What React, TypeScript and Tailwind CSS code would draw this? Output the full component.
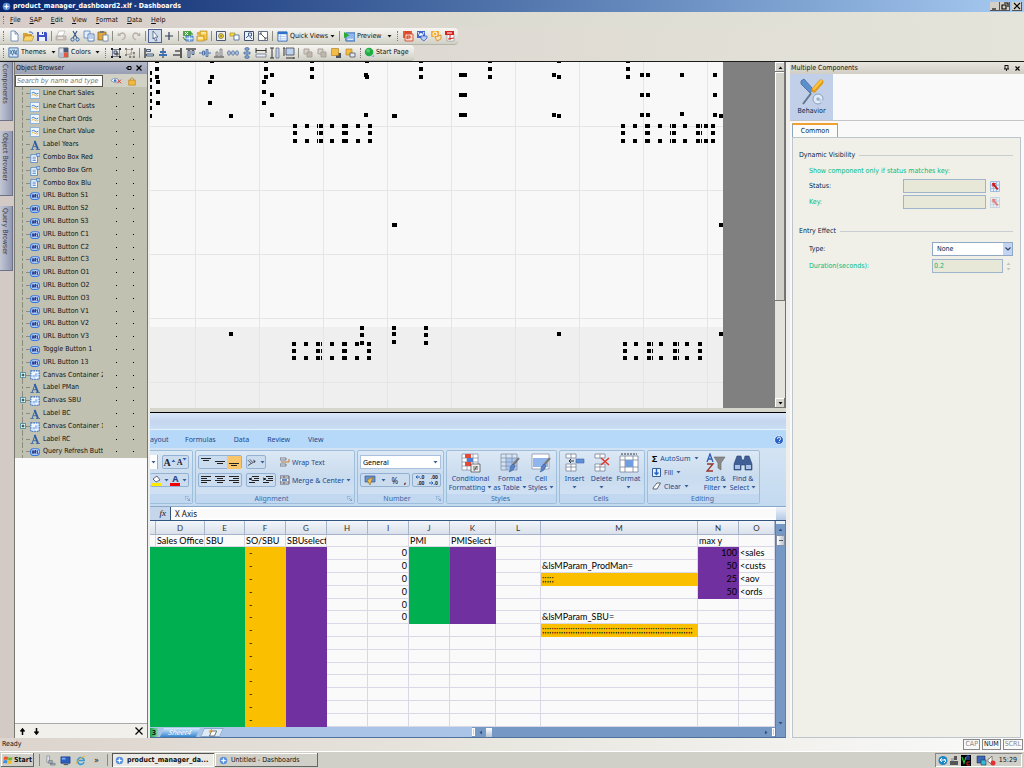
import type { ReactNode } from "react";
import clsx from "clsx";

type IconName = keyof typeof glyphs;

const glyphs = {
  page: <path d="M3 1h4l3 3v7H3z M7 1v3h3" fill="#fdfeff" stroke="#5f7fae" strokeWidth=".8" />,
  open: (
    <>
      <path d="M1 3h4l1 1h4v7H1z" fill="#d9a032" />
      <path d="M3 6h9l-2 5H1z" fill="#f9d56b" stroke="#a77b25" strokeWidth=".5" />
      <path d="M7 2q3-1 4 2" fill="none" stroke="#3f6fb8" />
    </>
  ),
  save: (
    <>
      <path d="M1 2h9l1 1v8H1z" fill="#3f50c8" />
      <path d="M3 2h5v3H3zM3 7h6v4H3z" fill="#eef1ff" />
      <path d="M6 2h1v2H6z" fill="#3040a0" />
    </>
  ),
  print: (
    <>
      <path d="M4 1h6L8 6H2z" fill="#fff" stroke="#b0a9a4" strokeWidth=".6" />
      <path d="M1 6h10v4H1z" fill="#c9c1bb" stroke="#a79e98" strokeWidth=".6" />
      <path d="M3 8h5" stroke="#fff" />
    </>
  ),
  cut: (
    <>
      <path d="M4 1l4 7M8 1L4 8" stroke="#3c5680" strokeWidth="1.2" />
      <circle cx="3.5" cy="9.5" r="1.6" fill="none" stroke="#2f62a8" />
      <circle cx="8.5" cy="9.5" r="1.6" fill="none" stroke="#2f62a8" />
    </>
  ),
  copy: (
    <>
      <path d="M1 1h6v7H1z" fill="#e4edfb" stroke="#5580bd" strokeWidth=".8" />
      <path d="M5 4h6v7H5z" fill="#f6faff" stroke="#3f6cb0" strokeWidth=".8" />
      <path d="M6 6h4M6 8h4" stroke="#5580bd" strokeWidth=".7" />
    </>
  ),
  paste: (
    <>
      <path d="M1 2h8v8H1z" fill="#e0a83f" stroke="#7c5a1c" strokeWidth=".7" />
      <path d="M3 1h4v2H3z" fill="#777" />
      <path d="M6 5h5v6H6z" fill="#fff" stroke="#4a6da8" strokeWidth=".7" />
    </>
  ),
  undo: (
    <>
      <path d="M2 2.500L1.500 6 5 6z" fill="#b7afa8" />
      <path d="M3 5Q7 1 9 5q1 3-3 5" fill="none" stroke="#b7afa8" strokeWidth="1.300" />
    </>
  ),
  redo: (
    <>
      <path d="M10 2.500l.5 3.500L7 6z" fill="#b7afa8" />
      <path d="M9 5Q5 1 3 5q-1 3 3 5" fill="none" stroke="#b7afa8" strokeWidth="1.300" />
    </>
  ),
  cursor: <path d="M4 1l5 6H6.500L8 10.500 6.500 11 5 7.500 4 9z" fill="#fff" stroke="#334a78" strokeWidth=".7" />,
  plus: <path d="M6 2v8M2 6h8" stroke="#33405a" strokeWidth="1.200" />,
  excel: (
    <>
      <path d="M1 1h8v5H1z" fill="#4da548" />
      <path d="M3 2l3 3M6 2L3 5" stroke="#fff" />
      <path d="M4 6h7v5H4z" fill="#8fb8ee" stroke="#3f70b5" strokeWidth=".8" />
      <path d="M1 7l2 3h1M10 5V3H8" fill="none" stroke="#2f8a35" />
      <path d="M4 8.500h7M7.500 6v5" stroke="#fff" strokeWidth=".6" />
    </>
  ),
  db: (
    <>
      <path d="M4 1h7v9H4z" fill="#f5c945" stroke="#ad7c18" strokeWidth=".6" />
      <path d="M1 6h7v5H1z" fill="#ffd050" stroke="#ad7c18" strokeWidth=".6" />
      <path d="M1 2h3v3H1z" fill="#e0b040" />
      <path d="M5 3h5M2 8h5" stroke="#fff" />
    </>
  ),
  gear: (
    <>
      <path d="M1.500 1.500h9v9h-9z" fill="#eef0ec" stroke="#4b5876" />
      <circle cx="6" cy="6" r="2.500" fill="#f0cf2b" stroke="#555" strokeWidth=".6" />
      <circle cx="6" cy="6" r=".8" fill="#555" />
    </>
  ),
  flow: (
    <>
      <path d="M1 3h5v3H1z" fill="#f5dc4d" stroke="#a08010" strokeWidth=".6" />
      <path d="M5 5h5v5H5z" fill="#fff" stroke="#42618f" strokeWidth=".8" />
    </>
  ),
  fit: (
    <>
      <path d="M1.500 1.500h9v9h-9z" fill="#eaf1fa" stroke="#42506b" />
      <path d="M5.500 3h3v3h-3zM3 8l2-2M7 7l2 2" fill="none" stroke="#42618f" />
    </>
  ),
  expand: (
    <>
      <path d="M1.500 1.500h9v9h-9z" fill="#fff" stroke="#42506b" strokeWidth=".8" />
      <path d="M3 5V3h2M7 9h2V7M3.500 3.500l5 5" fill="none" stroke="#445" strokeWidth=".9" />
    </>
  ),
  window: (
    <>
      <path d="M1 1h10v10H1z" fill="#f7fbff" stroke="#2763b5" />
      <path d="M1 1h10v2.500H1z" fill="#2f72cb" />
      <path d="M2 6h8M2 8.500h8M4 4v7" stroke="#9dbce5" strokeWidth=".8" />
    </>
  ),
  preview: (
    <>
      <path d="M2 2h10v9H2z" fill="#8db7ec" stroke="#376cb2" />
      <path d="M0 1l6 3.500L0 8z" fill="#2daa32" />
      <path d="M4 9h6" stroke="#fff" />
    </>
  ),
  ppt: (
    <>
      <path d="M1 1h9v7H1z" fill="#e45b3c" />
      <path d="M3 4h8v7H3z" fill="#fbd9ca" stroke="#cb3c21" strokeWidth=".8" />
      <path d="M3 2h5M5 9V6h3v2H5" fill="none" stroke="#cf3418" />
    </>
  ),
  word: (
    <>
      <path d="M1 1h8v7H1z" fill="#4167cf" />
      <path d="M2 2l2 4 1-3 1 3 2-4" stroke="#fff" fill="none" />
      <path d="M5 6h6v2l-3 3-3-2z" fill="#b5ccf4" stroke="#3456b5" strokeWidth=".7" />
    </>
  ),
  outlook: (
    <>
      <path d="M1 1h8v6H1z" fill="#f5ad37" />
      <circle cx="5" cy="4" r="2" fill="none" stroke="#fff" />
      <path d="M5 7l6-2v4l-4 2z" fill="#ffe2ab" stroke="#ca7a17" strokeWidth=".7" />
    </>
  ),
  pdf: (
    <>
      <path d="M3 4h7v7H3z" fill="#fff" stroke="#999" strokeWidth=".7" />
      <path d="M1 1h9v4H1z" fill="#d8201c" />
      <path d="M3 3h5" stroke="#fff" />
      <path d="M4 9l6-1M6 5v5" stroke="#c22" />
    </>
  ),
  themes: (
    <>
      <path d="M1 1h10v10H1z" fill="#d9ebfb" stroke="#3b6ea5" />
      <path d="M2 3l3 6 2-6 3 6M2 8l3-5 3 5 2-5" fill="none" stroke="#2a5c93" strokeWidth=".8" />
    </>
  ),
  colors: (
    <>
      <path d="M1 1h10v10H1z" fill="#dfe4ea" stroke="#567" strokeWidth=".8" />
      <path d="M6 1h5v5H6z" fill="#4a5a78" />
      <path d="M6 6h5v5H6z" fill="#e4593d" />
      <path d="M1 6h5v5H1z" fill="#b5c3d4" />
    </>
  ),
  group: (
    <>
      <path d="M2.500 2.500h7v7h-7z" fill="none" stroke="#42506b" strokeWidth=".7" />
      <path d="M1 1h2v2H1zM9 1h2v2H9zM1 9h2v2H1zM9 9h2v2H9z" fill="#222" />
      <path d="M4 4h3v3H4zM6 6h2v2H6z" fill="#bcd3f0" stroke="#223" strokeWidth=".7" />
    </>
  ),
  ungroup: (
    <>
      <path d="M2.500 2.500h5v5h-5zM6 6h4v4H6z" fill="none" stroke="#b3aaa0" />
      <path d="M1 1h2v2H1zM7 1h2v2H7zM1 7h2v2H1zM9 9h2v2H9zM5 9h2v2H5zM9 5h2v2H9z" fill="#8b8379" />
    </>
  ),
  alignL: (
    <>
      <path d="M2 1v10" stroke="#222" strokeWidth="1.200" />
      <path d="M3.500 2.500h4v2h-4zM3.500 7h7v2h-7z" fill="#cfe0f5" stroke="#2c3c5c" strokeWidth=".8" />
    </>
  ),
  alignC: (
    <>
      <path d="M6 1v10" stroke="#222" />
      <path d="M2 8h8M3 5h6" stroke="#3a70b8" strokeWidth="2" />
    </>
  ),
  alignR: (
    <>
      <path d="M10 1v10" stroke="#222" strokeWidth="1.400" />
      <path d="M4 4h5M2 8h7" stroke="#777" strokeWidth="2" />
    </>
  ),
  alignT: (
    <>
      <path d="M1 2h10" stroke="#222" strokeWidth="1.200" />
      <path d="M3 3.500h2v7H3zM7 3.500h2v4H7z" fill="#cfe0f5" stroke="#30405f" strokeWidth=".8" />
    </>
  ),
  alignM: (
    <>
      <path d="M0 6h12" stroke="#3a70b8" />
      <path d="M3.500 4h2v4h-2zM7 2.500h2v7H7z" fill="#9bbce8" stroke="#3d5f90" strokeWidth=".7" />
    </>
  ),
  alignB: (
    <>
      <path d="M1 10h10" stroke="#555" strokeWidth="1.200" />
      <path d="M3 5h2v4H3zM7 2h2v7H7z" fill="#d5d8de" stroke="#76777e" strokeWidth=".8" />
    </>
  ),
  spaceH: (
    <>
      <path d="M0 6h12" stroke="#3a70b8" />
      <path d="M1 4h2v4H1zM5 4h2v4H5zM9 4h2v4H9z" fill="#e8f0fb" stroke="#3d5f90" strokeWidth=".7" />
    </>
  ),
  spaceV: (
    <>
      <path d="M6 0v12" stroke="#3a70b8" />
      <path d="M4 1h4v2H4zM3 5h6v2H3zM4 9h4v2H4z" fill="#9bbce8" stroke="#3d5f90" strokeWidth=".7" />
    </>
  ),
  sameW: (
    <>
      <path d="M1 1v5M11 1v5M1 3.500h10" stroke="#222" strokeWidth=".9" />
      <path d="M1 7h10v3H1z" fill="#e4ecf7" stroke="#667" strokeWidth=".7" />
    </>
  ),
  sameH: (
    <>
      <path d="M1 1h4M1 11h4M3 1v10" stroke="#222" strokeWidth=".9" />
      <path d="M7 1h3v10H7z" fill="#bcd3f0" stroke="#667" strokeWidth=".7" />
    </>
  ),
  sameB: (
    <>
      <path d="M1 1v8M3 11h8M0 1h2M11 10v2" stroke="#222" strokeWidth=".9" />
      <path d="M3 1h8v7H3z" fill="#bcd3f0" stroke="#445" strokeWidth=".8" />
    </>
  ),
  backOff: (
    <>
      <path d="M2 2h5v5H2z" fill="#d8d2cb" stroke="#a9a199" />
      <path d="M5 5h5v5H5z" fill="#beb6ad" stroke="#a9a199" />
    </>
  ),
  front: (
    <>
      <path d="M6 6h5v5H6z" fill="#4d5360" />
      <path d="M1.500 1.500h7v7h-7z" fill="#f4bb45" stroke="#a8781d" strokeWidth=".6" />
    </>
  ),
  back: (
    <>
      <path d="M2 2h6v6H2z" fill="#f4bb45" stroke="#a8781d" strokeWidth=".6" />
      <path d="M6 6h5v4H6z" fill="#e4e9f0" stroke="#4d5360" strokeWidth=".8" />
    </>
  ),
  start: (
    <>
      <circle cx="5.500" cy="5.500" r="4.700" fill="#1fae45" />
      <circle cx="4.500" cy="4" r="2" fill="#7fe08e" opacity=".6" />
      <path d="M8 11l3-3v3z" fill="#7db9e8" />
    </>
  ),
  chart: (
    <>
      <path d="M.5.5h11v11H.5z" fill="#eef6ff" stroke="#6ea0dc" strokeWidth=".9" />
      <path d="M2 5q2-2 4 0t4 0" fill="none" stroke="#3f7cc8" strokeWidth="1.200" />
      <path d="M2 7.500q2-2 4 0t4 0" fill="none" stroke="#ecb73c" strokeWidth="1.200" />
    </>
  ),
  label: (
    <>
      <path d="M2.500 11L6 1.500" fill="none" stroke="#2b5fa5" strokeWidth="1.100" />
      <path d="M5.500 1l4 10" fill="none" stroke="#2b5fa5" strokeWidth="2.200" />
      <path d="M.5 11.500h4M7 11.500h5M4 8h4" stroke="#2b5fa5" />
    </>
  ),
  combo: (
    <>
      <path d="M1 2h8v9.500H1z" fill="#f2f8ff" stroke="#3a76c6" strokeWidth=".9" />
      <path d="M8 .5h4v3.500H8z" fill="#bcd6f5" stroke="#2f69b8" strokeWidth=".8" />
      <path d="M3 5h4M3 7h4M3 9h4" stroke="#3a76c6" strokeWidth=".9" />
    </>
  ),
  url: (
    <>
      <rect x=".7" y="2" width="10.600" height="8" rx="3" fill="#cfe3ff" stroke="#3878dc" strokeWidth="1.300" />
      <path d="M2.800 4v3.500h1.500V4M5.800 8V4.300h1.400v1.600H6l1.200 2M8.800 4v3.700H10" fill="none" stroke="#0d2480" strokeWidth="1.100" />
    </>
  ),
  container: (
    <>
      <path d="M1 1h10v10H1z" fill="#eff6ff" stroke="#2f6bc4" strokeWidth="1.300" strokeDasharray="2 1" />
      <path d="M3 6h3v3H3zM6 4h3v4H6z" fill="#9cc3f2" />
    </>
  ),
  eye: (
    <>
      <path d="M0 6q5-5 9 0-4 4-9 0z" fill="#fff" stroke="#6c7faa" strokeWidth=".8" />
      <circle cx="4.500" cy="6" r="1.500" fill="#3c77c4" />
      <path d="M7 5l4 4M11 5L7 9" stroke="#d33" />
    </>
  ),
  lock: (
    <>
      <path d="M4 6V3.500q2-3 4 0V6" fill="none" stroke="#bd8b24" />
      <path d="M2 5h8v6H2z" fill="#f3b83c" stroke="#b37d1a" strokeWidth=".7" />
    </>
  ),
  orb: (
    <>
      <circle cx="6" cy="6" r="5" fill="#5b93e0" />
      <path d="M6 2l1 3 3 1-3 1-1 3-1-3-3-1 3-1z" fill="#fff" />
    </>
  ),
  monitor: (
    <>
      <path d="M1 2h10v7H1z" fill="#2c5fc0" stroke="#173677" strokeWidth=".7" />
      <path d="M4 10h5v1H4z" fill="#444" />
      <path d="M2 3h4v2H2z" fill="#7daaf0" />
    </>
  ),
  server: (
    <>
      <path d="M2 1h3v7H2z" fill="#dfe3e8" stroke="#76828f" strokeWidth=".7" />
      <path d="M4 6h4v3H4zM6 9h5v2H6z" fill="#a5afb9" stroke="#5f6a76" strokeWidth=".6" />
    </>
  ),
  ie: (
    <>
      <path d="M10 8q-2 3-5 2-3-2-2-5 2-3 5-2 2 1 2 3H4" fill="none" stroke="#3399dd" strokeWidth="1.700" />
      <path d="M1 10Q3 4 11 1" fill="none" stroke="#f1b52a" />
    </>
  ),
};

function Icon({ name, size = 12 }: { name: IconName; size?: number }) {
  return (
    <svg width={size} height={size} viewBox="0 0 12 12" className="shrink-0" aria-hidden="true">
      {glyphs[name]}
    </svg>
  );
}

const Arrow = ({ className = "text-black" }: { className?: string }) => (
  <svg width="5" height="3" viewBox="0 0 5 3" className={clsx("shrink-0", className)} aria-hidden="true">
    <path d="M.5 0h4L2.500 2.500z" fill="currentColor" />
  </svg>
);

function Tool({ name, active }: { name: IconName; active?: boolean }) {
  return (
    <button
      aria-label={name}
      className={clsx(
        "flex h-[14px] w-[14px] shrink-0 items-center justify-center border",
        active ? "border-[#4f6391] bg-[#d5dcea]" : "border-transparent"
      )}
    >
      <Icon name={name} />
    </button>
  );
}

const Grip = () => <span className="mx-[3px] h-[10px] w-0 shrink-0 border-l border-dotted border-[#777]" />;
const Sep = () => <span className="mx-[2px] h-[10px] w-px shrink-0 bg-[#8d8d86]" />;

const menus = ["File", "SAP", "Edit", "View", "Format", "Data", "Help"];

const tree: { name: string; icon: IconName; expand?: boolean }[] = [
  { name: "Line Chart Sales", icon: "chart" },
  { name: "Line Chart Custs", icon: "chart" },
  { name: "Line Chart Ords", icon: "chart" },
  { name: "Line Chart Value", icon: "chart" },
  { name: "Label Years", icon: "label" },
  { name: "Combo Box Red", icon: "combo" },
  { name: "Combo Box Grn", icon: "combo" },
  { name: "Combo Box Blu", icon: "combo" },
  { name: "URL Button S1", icon: "url" },
  { name: "URL Button S2", icon: "url" },
  { name: "URL Button S3", icon: "url" },
  { name: "URL Button C1", icon: "url" },
  { name: "URL Button C2", icon: "url" },
  { name: "URL Button C3", icon: "url" },
  { name: "URL Button O1", icon: "url" },
  { name: "URL Button O2", icon: "url" },
  { name: "URL Button O3", icon: "url" },
  { name: "URL Button V1", icon: "url" },
  { name: "URL Button V2", icon: "url" },
  { name: "URL Button V3", icon: "url" },
  { name: "Toggle Button 1", icon: "url" },
  { name: "URL Button 13", icon: "url" },
  { name: "Canvas Container 2", icon: "container", expand: true },
  { name: "Label PMan", icon: "label" },
  { name: "Canvas SBU", icon: "container", expand: true },
  { name: "Label BC", icon: "label" },
  { name: "Canvas Container 1", icon: "container", expand: true },
  { name: "Label RC", icon: "label" },
  { name: "Query Refresh Button", icon: "url" },
];

// selection handles on the design canvas: [x positions, y positions]
const handles: [number[], number[]][] = [
  [[0], [11, 18, 25, 32, 39, 46, 54]],
  [[7], [-1, 7, 15]],
  [[8], [20, 30, 41]],
  [[62], [-1, 15]],
  [[60], [20, 41]],
  [[81], [54]],
  [[116], [-1, 7, 15]],
  [[114], [20, 30, 41]],
  [[122], [13, 33, 53]],
  [[162, 271, 340, 478], [-1, 7, 15]],
  [[216], [13, 53]],
  [[217], [-1, 15]],
  [[311, 315], [13, 33, 53]],
  [[404], [13, 53]],
  [[409], [-1, 15, 54]],
  [[492, 498, 565], [13, 33, 53]],
  [[532], [13, 52]],
  [[571], [54, 163, 272]],
  [[245], [54, 163]],
  [[145, 171, 194, 196, 220], [64, 71, 79]],
  [[157, 182, 208], [64, 79]],
  [[473, 498, 524, 548, 563], [64, 71, 79]],
  [[485, 510, 535, 556], [64, 79]],
  [[81, 409], [272]],
  [[212, 276], [266, 273, 281]],
  [[244], [266, 272, 280]],
  [[144, 168, 194, 195, 219], [282, 289, 296]],
  [[156, 182, 207], [282, 296]],
  [[475, 499, 525, 550], [282, 289, 296]],
  [[486, 511, 537], [282, 296]],
];
const slivers: [number, number[]][] = [
  [242, [54, 163, 272]],
  [167, [64, 71, 79]],
  [495, [64, 71, 79]],
  [520, [64, 71, 79]],
  [551, [64, 71, 79]],
  [171, [282, 289, 296]],
  [502, [282, 289, 296]],
  [528, [282, 289, 296]],
];

function DesignCanvas() {
  return (
    <div className="flex h-[346px] shrink-0 bg-[#808080]">
      <svg width="573" height="346" viewBox="0 0 573 346" className="shrink-0" role="img" aria-label="Canvas">
        <path d="M0 0h573v346H0z" fill="#f8f8f8" />
        <path d="M0 265h573v81H0z" fill="#efefef" />
        <g fill="#e5e5e5">
          {[45, 109, 173, 237, 301, 365, 429, 493, 557].map((x) => (
            <rect key={x} x={x} y="0" width="1" height="346" />
          ))}
          {[64, 128, 192, 256, 320].map((y) => (
            <rect key={y} x="0" y={y} width="573" height="1" />
          ))}
        </g>
        {handles.map(([xs, ys]) =>
          xs.map((x) => ys.map((y) => <rect key={`${x}-${y}`} x={x - 2} y={y - 2} width="4" height="4" fill="#000" />))
        )}
        {slivers.map(([x, ys]) =>
          ys.map((y) => <rect key={`${x}-${y}`} x={x} y={y - 2} width="1" height="4" fill="#000" />)
        )}
      </svg>
      <div className="ml-auto flex w-[11px] flex-col border-r border-[#707070] bg-[#e4e4dc]">
        <button aria-label="Scroll up" className="flex h-[10px] items-center justify-center bg-[#d4d4cc] shadow-[inset_-1px_-1px_0_#777,inset_1px_1px_0_#fff]">
          <Arrow className="rotate-180" />
        </button>
        <div className="h-[229px] bg-[#d0d0c8] shadow-[inset_-1px_-1px_0_#777,inset_1px_1px_0_#fff]" />
        <button aria-label="Scroll down" className="mt-auto flex h-[10px] items-center justify-center bg-[#d4d4cc] shadow-[inset_-1px_-1px_0_#777,inset_1px_1px_0_#fff]">
          <Arrow />
        </button>
      </div>
    </div>
  );
}

function RibbonGroup({ label, launcher, className, children }: { label?: string; launcher?: boolean; className: string; children: ReactNode }) {
  return (
    <section className={clsx("mr-[2px] flex h-[54px] shrink-0 flex-col rounded-[2px] border border-[#9ebfdb] bg-linear-to-b from-[#dce8f5] via-[#c9dbee] to-[#d3e4f5]", className)}>
      <div className="flex min-h-0 flex-1">{children}</div>
      <div className="flex h-[9px] items-center bg-[#c2d8f0] pr-[2px] text-[#3f68a5]">
        <span className="flex-1 text-center">{label}</span>
        {launcher && (
          <svg width="5" height="5" viewBox="0 0 5 5" aria-hidden="true">
            <path d="M0 4V0h4M2 2l3 3M5 2v3H2" fill="none" stroke="#6a8fb8" strokeWidth=".7" />
          </svg>
        )}
      </div>
    </section>
  );
}

const btnSet = "flex h-[14px] items-center rounded-[2px] border border-[#93b1d3] bg-[#cbdcef]";

const Lines = ({ d, box }: { d: string; box?: boolean }) => (
  <button aria-label="Align" className={clsx("flex h-[13px] w-[14px] items-center justify-center", box && "bg-[#f9c56a]")}>
    <svg width="10" height="10" viewBox="0 0 10 10">
      <path d={d} stroke="#222" strokeWidth="1" fill="none" />
    </svg>
  </button>
);

function BigButton({ lines, className, children }: { lines: string[]; className: string; children: ReactNode }) {
  return (
    <button className={clsx("flex shrink-0 flex-col items-center pt-[2px] text-center leading-[9px]", className)}>
      <svg width="20" height="20" viewBox="0 0 20 20" className="mb-px">
        {children}
      </svg>
      <span>{lines[0]}</span>
      <span className="flex h-[9px] items-center gap-[2px] whitespace-nowrap">
        {lines[1]}
        <Arrow className="text-[#3a5f96]" />
      </span>
    </button>
  );
}

const gridPath = "M1 1h16v16H1zM1 5h16M1 9h16M1 13h16M6 1v16M12 1v16";
const brush = (
  <>
    <path d="M19 5l-7 8" stroke="#777" strokeWidth="2" />
    <path d="M13 11l2 2q-1 5-6 6 2-2 1-5z" fill="#5b83c3" stroke="#355a94" strokeWidth=".5" />
  </>
);

function Ribbon() {
  return (
    <div className="flex h-[59px] shrink-0 border-b border-[#8aa8c8] bg-linear-to-b from-[#d3e3f3] to-[#c3daf0] pt-[2px] text-[#24498c]">
      <RibbonGroup className="w-[43px] rounded-l-none border-l-0" launcher>
        <div className="flex flex-col gap-1 pt-[4px]">
          <div className="flex gap-1">
            <span className="flex h-[14px] w-2 items-center justify-center border-r border-[#93b1d3] bg-white">
              <Arrow className="text-[#3a5f96]" />
            </span>
            <div className={clsx(btnSet, "w-[27px] justify-around font-['Liberation_Serif',serif] font-bold text-[#223]")}>
              <button className="flex text-[10px]">
                A
                <Arrow className="mt-px rotate-180 text-[#2c62b5]" />
              </button>
              <button className="flex text-[8px]">
                A
                <Arrow className="text-[#2c62b5]" />
              </button>
            </div>
          </div>
          <div className={clsx(btnSet, "w-[39px] justify-around border-l-0")}>
            <svg width="11" height="12" viewBox="0 0 11 12" aria-hidden="true">
              <path d="M2 5l4-3 3 4-4 2z" fill="#fff" stroke="#446" strokeWidth=".8" />
              <path d="M0 9h10v3H0z" fill="#ffea00" />
            </svg>
            <Arrow className="text-[#3a5f96]" />
            <button className="flex flex-col items-center text-[9px] leading-[8px] font-bold text-[#24498c]">
              A<span className="h-[3px] w-[10px] bg-[#f00000]" />
            </button>
            <Arrow className="text-[#3a5f96]" />
          </div>
        </div>
      </RibbonGroup>

      <RibbonGroup className="w-[160px]" label="Alignment" launcher>
        <div className="flex flex-col gap-1 pt-[4px] pl-[2px]">
          <div className="flex gap-1">
            <div className={btnSet}>
              <Lines d="M0 1.500h10M2 3.500h6" />
              <Lines d="M0 4.500h10M2 6.500h6" />
              <Lines d="M0 6.500h10M2 8.500h6" box />
            </div>
            <div className={clsx(btnSet, "w-[20px] justify-center gap-1")}>
              <svg width="10" height="10" viewBox="0 0 10 10" aria-hidden="true">
                <path d="M1 3l4 4M3 2l3 3M1 9l8-5M7 3l2 1-1 2" stroke="#445" fill="none" />
              </svg>
              <Arrow className="text-[#3a5f96]" />
            </div>
          </div>
          <div className="flex gap-1">
            <div className={btnSet}>
              <Lines d="M0 1.500h10M0 3.500h6M0 5.500h10M0 7.500h6" />
              <Lines d="M0 1.500h10M2 3.500h6M0 5.500h10M2 7.500h6" />
              <Lines d="M0 1.500h10M4 3.500h6M0 5.500h10M4 7.500h6" />
            </div>
            <div className={btnSet}>
              <Lines d="M3 1.500h7M5 3.500h5M3 5.500h7M0 7.500h6M3 3L0 4l3 1" />
              <Lines d="M3 1.500h7M5 3.500h5M3 5.500h7M0 7.500h6M0 3l3 1-3 1" />
            </div>
          </div>
        </div>
        <div className="ml-1 flex flex-col gap-1 pt-[4px]">
          <button className="flex h-[14px] items-center gap-[2px]">
            <svg width="10" height="10" viewBox="0 0 10 10">
              <path d="M0 1h6v2H0zM0 7h6v2H0z" fill="#e7edf5" stroke="#556" strokeWidth=".7" />
              <path d="M1 5h8V2" stroke="#c17a26" fill="none" />
            </svg>
            Wrap Text
          </button>
          <button className="flex h-[14px] items-center gap-[2px] whitespace-nowrap">
            <svg width="10" height="10" viewBox="0 0 10 10">
              <path d="M0 1h9v8H0zM0 3h9M0 7h9M4 1v2M4 7v2" fill="#fff" stroke="#445" strokeWidth=".8" />
              <path d="M2 5h5" stroke="#2c62b5" strokeWidth="1.500" />
            </svg>
            Merge &amp; Center
            <Arrow className="text-[#3a5f96]" />
          </button>
        </div>
      </RibbonGroup>

      <RibbonGroup className="w-[87px]" label="Number" launcher>
        <div className="flex w-full flex-col gap-1 px-[2px] pt-[4px]">
          <label className="flex h-[14px] items-center border border-[#a9c1de] bg-white pr-[2px] text-black">
            <select aria-label="Number format" className="min-w-0 flex-1 appearance-none pl-[2px]">
              <option>General</option>
            </select>
            <Arrow className="text-[#3a5f96]" />
          </label>
          <div className="flex justify-between">
            <div className={clsx(btnSet, "w-[50px] justify-around")}>
              <svg width="12" height="12" viewBox="0 0 12 12" aria-hidden="true">
                <path d="M1 2h10v6H1z" fill="#6a93cf" stroke="#35578f" strokeWidth=".7" />
                <path d="M3 6l6-3-3 8z" fill="#edc04d" stroke="#8b661a" strokeWidth=".6" />
              </svg>
              <Arrow className="text-[#3a5f96]" />
              <button className="text-[8px] text-[#223]">%</button>
              <button className="text-[9px] font-bold text-[#223]">,</button>
            </div>
            <div className={clsx(btnSet, "w-[29px] justify-around text-[5px] leading-[6px] font-bold text-[#223]")}>
              <button className="flex flex-col items-end">
                <span className="flex h-[6px] items-center">
                  <svg width="5" height="4" viewBox="0 0 5 4"><path d="M5 2H1M2.500.5L1 2l1.500 1.500" stroke="#2c62b5" fill="none" /></svg>
                  .0
                </span>
                <span className="h-[6px]">.00</span>
              </button>
              <button className="flex flex-col items-end">
                <span className="h-[6px]">.00</span>
                <span className="flex h-[6px] items-center">
                  <svg width="5" height="4" viewBox="0 0 5 4"><path d="M0 2h4M2.500.5L4 2 2.500 3.500" stroke="#2c62b5" fill="none" /></svg>
                  .0
                </span>
              </button>
            </div>
          </div>
        </div>
      </RibbonGroup>

      <RibbonGroup className="w-[111px]" label="Styles">
        <BigButton lines={["Conditional", "Formatting"]} className="w-[47px]">
          <path d={gridPath} fill="#fff" stroke="#8793a8" strokeWidth=".8" />
          <path d="M4 1h6v4H4zM4 9h6v4H4z" fill="#e44a35" />
          <path d="M6 5h6v4H6z" fill="#4b7fd8" />
          <path d="M10 11h9v8h-9z" fill="#eee" stroke="#444" strokeWidth=".7" />
          <path d="M12 14h5M12 16h5M16 13l-3 5" stroke="#333" strokeWidth=".7" />
        </BigButton>
        <BigButton lines={["Format", "as Table"]} className="w-[32px]">
          <path d="M6 5h11v12H6z" fill="#a7c7f2" />
          <path d={gridPath} fill="none" stroke="#8793a8" strokeWidth=".8" />
          {brush}
        </BigButton>
        <BigButton lines={["Cell", "Styles"]} className="w-[30px]">
          <path d="M1 1h17v15H1z" fill="#fff" stroke="#8793a8" strokeWidth=".8" />
          <path d="M2 5h15v9H2z" fill="#8fb5ec" />
          {brush}
        </BigButton>
      </RibbonGroup>

      <RibbonGroup className="w-[86px]" label="Cells">
        <BigButton lines={["Insert", ""]} className="w-[29px]">
          <path d="M1 1h10v4H1zM1 11h10v7H1zM1 14h10M6 1v4M6 11v7" fill="#fff" stroke="#77839a" strokeWidth=".8" />
          <path d="M11 6h8v4h-8z" fill="#5f8fd8" stroke="#3f66a5" strokeWidth=".6" />
          <path d="M9 8H4M6 6L4 8l2 2" stroke="#333" fill="none" />
        </BigButton>
        <BigButton lines={["Delete", ""]} className="w-[25px]">
          <path d="M3 1h10v4H3zM3 11h10v7H3zM3 14h10M8 1v4M8 11v7" fill="#fff" stroke="#77839a" strokeWidth=".8" />
          <path d="M9 5l8 7M17 5l-8 7" stroke="#e23a28" strokeWidth="1.600" />
        </BigButton>
        <BigButton lines={["Format", ""]} className="w-[29px]">
          <path d="M1 3h18v16H1zM1 7h18M1 14h18M6 3v16M14 3v16" fill="#fff" stroke="#77839a" strokeWidth=".8" />
          <path d="M6 7h8v7H6z" fill="#6f9de0" />
          <path d="M2 1h16" stroke="#333" strokeDasharray="2 1" />
        </BigButton>
      </RibbonGroup>

      <RibbonGroup className="w-[113px]" label="Editing">
        <div className="flex w-[50px] shrink-0 flex-col pl-[4px]">
          <button className="flex h-[14px] items-center gap-[3px] whitespace-nowrap">
            <span className="w-2 text-[9px] font-bold text-black">Σ</span>AutoSum
            <Arrow className="text-[#3a5f96]" />
          </button>
          <button className="flex h-[14px] items-center gap-[3px]">
            <svg width="9" height="9" viewBox="0 0 9 9">
              <path d="M.5.5h8v8h-8z" fill="#e6f0ff" stroke="#35609f" />
              <path d="M4.500 1v5M2.500 4.500l2 2 2-2" stroke="#2462c4" strokeWidth="1.400" fill="none" />
            </svg>
            Fill
            <Arrow className="text-[#3a5f96]" />
          </button>
          <button className="flex h-[14px] items-center gap-[3px]">
            <svg width="9" height="9" viewBox="0 0 9 9">
              <path d="M1 6l4-5h3.500L5 7H1z" fill="#fff" stroke="#445" strokeWidth=".8" />
            </svg>
            Clear
            <Arrow className="text-[#3a5f96]" />
          </button>
        </div>
        <BigButton lines={["Sort &", "Filter"]} className="ml-1 w-[27px]">
          <path d="M1 9l3-8 3 8M2 6h4" fill="none" stroke="#2d5db0" strokeWidth="1.300" />
          <path d="M1 11h6l-6 7h6" fill="none" stroke="#96342a" strokeWidth="1.300" />
          <path d="M8 4h11l-4 6v7l-3-2v-5z" fill="#8a8a8a" stroke="#666" strokeWidth=".6" />
        </BigButton>
        <BigButton lines={["Find &", "Select"]} className="w-[28px]">
          <path d="M4 3h4l1 4h2l1-4h4l3 8v6h-7v-5H8v5H1v-6z" fill="#3f5f95" stroke="#2a4270" strokeWidth=".6" />
          <path d="M2 12h5v4H2zM13 12h5v4h-5z" fill="#a8c1e6" />
        </BigButton>
      </RibbonGroup>
    </div>
  );
}

const columns = ["", "D", "E", "F", "G", "H", "I", "J", "K", "L", "M", "N", "O"];
const widths = ["w-[6px]", "w-[49px]", "w-[40px]", "w-[41px]", "w-[41px]", "w-[41px]", "w-[41px]", "w-[41px]", "w-[46px]", "w-[45px]", "w-[157px]", "w-[41px]", ""];

const cells: Record<string, string> = {
  D1: "Sales Office", E1: "SBU", F1: "SO/SBU", G1: "SBUselect", J1: "PMI", K1: "PMISelect", N1: "max y",
  I2: "0", I3: "0", I4: "0", I5: "0", I6: "0", I7: "0",
  M3: "&lsMParam_ProdMan=", M4: ";;;;;", M7: "&lsMParam_SBU=", M8: ";".repeat(64),
  N2: "100", N3: "50", N4: "25", N5: "50",
  O2: "<sales", O3: "<custs", O4: "<aov", O5: "<ords",
};

function cellFill(col: string, row: number) {
  if (row > 1 && (col === "" || col === "D" || col === "E")) return "bg-[#00b050] border-[#00b050]";
  if (row > 1 && col === "F") return "bg-[#fac000] border-[#fac000]";
  if (row > 1 && col === "G") return "bg-[#7030a0] border-[#7030a0]";
  if (row > 1 && row < 8 && col === "J") return "bg-[#00b050] border-[#00b050]";
  if (row > 1 && row < 8 && col === "K") return "bg-[#7030a0] border-[#7030a0]";
  if (row > 1 && row < 6 && col === "N") return "bg-[#7030a0] border-[#7030a0]";
  if ((row === 4 || row === 8) && col === "M") return "bg-[#fac000] border-[#fac000]";
  return "border-[#d8d8e6]";
}

function Sheet() {
  return (
    <div className="flex min-h-0 flex-1 border-b border-[#4f719c]">
      <div className="flex min-w-0 flex-1 flex-col">
        <div className="min-h-0 flex-1 overflow-hidden bg-[#fafafa]">
          <table className="w-full table-fixed border-separate border-spacing-0 font-[Lato,sans-serif] text-[9px] leading-[10px] text-black">
            <thead>
              <tr className="h-[14px] bg-linear-to-b from-[#f2f5fa] to-[#d9dfea]">
                {columns.map((c, i) => (
                  <th key={c} className={clsx("border-r border-b border-[#a5b3cb] p-0 text-[8px] font-normal text-[#333]", widths[i])}>
                    {c}
                  </th>
                ))}
              </tr>
            </thead>
            <tbody>
              {Array.from({ length: 15 }, (_, i) => i + 1).map((row) => (
                <tr key={row} className={row % 5 === 1 ? "h-3" : "h-[13px]"}>
                  {columns.map((c) => (
                    <td
                      key={c}
                      className={clsx(
                        "overflow-hidden border-r border-b p-0 px-px whitespace-nowrap",
                        (c === "I" || c === "N") && row > 1 ? "text-right" : "text-left",
                        c === "F" && row > 1 && "pl-[4px]",
                        cellFill(c, row)
                      )}
                    >
                      {c === "F" && row > 1 ? "-" : cells[c + row]}
                    </td>
                  ))}
                </tr>
              ))}
            </tbody>
          </table>
        </div>
        <div className="flex h-[10px] shrink-0 items-center bg-[#a9c4e6] leading-[10px]">
          <button className="h-[9px] bg-linear-to-r from-[#16a050] to-[#7fd8a2] px-[2px] font-bold">3</button>
          <button className="ml-1 h-[9px] w-[36px] -skew-x-24 bg-linear-to-b from-[#d5ebff] to-[#3186cf] text-white">Sheet4</button>
          <button aria-label="Insert sheet" className="ml-1 flex h-[9px] w-[20px] -skew-x-24 items-center justify-center border border-[#8aa8cc] bg-[#dce9f7]">
            <svg width="9" height="8" viewBox="0 0 9 8">
              <path d="M3 2h5v5H3z" fill="#fff" stroke="#567" strokeWidth=".8" />
              <path d="M2 0v4M0 2h4" stroke="#e29a20" />
            </svg>
          </button>
          <div className="ml-auto flex h-full w-[303px] items-center bg-[#7698c4]">
            <span className="h-[8px] w-[3px] border border-white bg-[#c6d6ea]" />
            <Arrow className="ml-[3px] rotate-90 text-[#33507c]" />
            <span className="ml-[3px] h-[9px] w-[6px] bg-linear-to-b from-white to-[#b9c3d2]" />
            <Arrow className="ml-auto -rotate-90 text-[#33507c]" />
            <span className="ml-[3px] h-[8px] w-[3px] border border-white bg-[#c6d6ea]" />
          </div>
        </div>
      </div>
      <div className="flex w-[11px] shrink-0 flex-col items-center border-x border-[#5a7fb0] bg-[#7698c4]">
        <span className="h-[3px] w-full bg-[#e8eef6]" />
        <Arrow className="my-1 rotate-180 text-[#33507c]" />
        <span className="flex h-[11px] w-full items-center justify-center border border-[#8592a6] bg-linear-to-r from-white to-[#b9c3d2]">
          <span className="h-px w-1 bg-[#555]" />
        </span>
        <Arrow className="mt-auto mb-3 text-[#33507c]" />
      </div>
    </div>
  );
}

function ObjectBrowser() {
  return (
    <aside className="mr-[2px] flex w-[134px] shrink-0 flex-col border-x border-[#77776f] bg-[#fafafa]">
      <header className="flex h-[12px] shrink-0 items-center bg-linear-to-b from-[#b4b9c9] to-[#999fb4] px-px">
        <h2 className="flex-1">Object Browser</h2>
        <button aria-label="Pin">
          <svg width="6" height="6" viewBox="0 0 6 6"><path d="M0 3h2M2 1v4M2 1.500h3v3H2" stroke="#000" fill="none" /></svg>
        </button>
        <button aria-label="Close" className="mx-1">
          <svg width="6" height="6" viewBox="0 0 6 6"><path d="M.5.5l5 5M5.500.5l-5 5" stroke="#000" strokeWidth="1.200" /></svg>
        </button>
      </header>
      <div className="flex h-[13px] shrink-0 items-center bg-[#d2d1c6]">
        <input
          aria-label="Search"
          placeholder="Search by name and type"
          className="h-[12px] w-[88px] border border-[#55554d] bg-white px-px italic placeholder:text-[#777]"
        />
        <span className="ml-2"><Icon name="eye" size={11} /></span>
        <span className="ml-[5px]"><Icon name="lock" size={10} /></span>
      </div>
      <ul className="shrink-0 bg-[#c0c1b1]">
        {tree.map((item, i) => (
          <li key={item.name} className={clsx("flex items-center", i % 5 === 2 ? "h-3" : "h-[13px]")}>
            <span className="flex w-[15px] shrink-0 items-center self-stretch pl-[7px]">
              <span className="relative h-full border-l border-dashed border-[#8b8b7f]">
                {item.expand && (
                  <svg width="6" height="6" viewBox="0 0 6 6" className="absolute top-[3px] -left-[3px]">
                    <path d="M.5.5h5v5h-5z" fill="#dff" stroke="#3a7d96" strokeWidth=".8" />
                    <path d="M1.500 3h3M3 1.500v3" stroke="#000" strokeWidth=".8" />
                  </svg>
                )}
              </span>
              <span className="ml-[3px] w-[5px] border-t border-dashed border-[#8b8b7f]" />
            </span>
            <Icon name={item.icon} size={10} />
            <span className="ml-[3px] w-[60px] overflow-hidden whitespace-nowrap">{item.name}</span>
            <span className="ml-[13px] h-px w-px bg-black" />
            <span className="ml-4 h-px w-px bg-black" />
          </li>
        ))}
      </ul>
      <footer className="mt-auto flex h-[15px] shrink-0 items-center gap-[7px] border-t border-[#aaa] bg-[#f1f0ea] px-[4px]">
        <button aria-label="Move up">
          <svg width="7" height="7" viewBox="0 0 7 7"><path d="M3.500 1v6M1.500 3.500l2-2.500 2 2.500" stroke="#000" strokeWidth="1.500" fill="none" /></svg>
        </button>
        <button aria-label="Move down">
          <svg width="7" height="7" viewBox="0 0 7 7"><path d="M3.500 0v6M1.500 3.500l2 2.500 2-2.500" stroke="#000" strokeWidth="1.500" fill="none" /></svg>
        </button>
        <button aria-label="Delete" className="ml-auto">
          <svg width="8" height="8" viewBox="0 0 8 8"><path d="M.5.5l7 7M7.500.5l-7 7" stroke="#000" strokeWidth="1.200" /></svg>
        </button>
      </footer>
    </aside>
  );
}

const PickCell = ({ faded }: { faded?: boolean }) => (
  <button aria-label="Select cell" className={clsx("ml-[4px]", faded && "opacity-50")}>
    <svg width="10" height="11" viewBox="0 0 10 11">
      <path d="M.5.5h9v10h-9zM.5 4h9M.5 7.500h9M3.500.5v10M6.500.5v10" fill="#e5eefb" stroke="#8fb0d8" strokeWidth=".8" />
      <path d="M2 2h4L5 3.500 8.500 8 7 9 3.500 5 2.500 6z" fill="#d01c1c" />
    </svg>
  </button>
);

function Properties() {
  const field = "h-[14px] border border-[#9fb5cb] bg-[#e8e8d8]";
  return (
    <aside className="ml-[4px] flex w-[234px] shrink-0 flex-col bg-[#f9f9f9]">
      <header className="flex h-[12px] shrink-0 items-center bg-linear-to-b from-[#e8e6df] to-[#cfcdc4] pr-[4px] pl-px">
        <h2 className="flex-1">Multiple Components</h2>
        <button aria-label="Pin">
          <svg width="5" height="6" viewBox="0 0 5 6"><path d="M1 0v4M4 0v4M0 4h5M2.500 4v2M1 .5h3" stroke="#000" strokeWidth=".9" fill="none" /></svg>
        </button>
        <button aria-label="Close" className="ml-[6px]">
          <svg width="5" height="5" viewBox="0 0 5 5"><path d="M.5.5l4 4M4.500.5l-4 4" stroke="#000" strokeWidth="1.200" /></svg>
        </button>
      </header>
      <div className="h-[47px] shrink-0 border-b border-[#c4c4c4]">
        <button className="flex h-[46px] w-[43px] flex-col items-center bg-[#c1cfe8] pt-[4px] text-[#00284a]">
          <svg width="26" height="28" viewBox="0 0 26 28">
            <path d="M13 14L4 26" stroke="#66788f" strokeWidth="2" />
            <path d="M4 4l16 16" stroke="#b9cde6" strokeWidth="4" />
            <path d="M2 3l3-2 9 10-3 4-9-9z" fill="#5d8fcb" stroke="#3f6ca6" strokeWidth=".8" />
            <path d="M22 4l-7 8" stroke="#e09a1c" strokeWidth="5" strokeLinecap="round" />
            <path d="M22 3l-7 8" stroke="#f8c33e" strokeWidth="2.500" strokeLinecap="round" />
            <circle cx="19" cy="21" r="5" fill="#e3ecf6" stroke="#7f97b4" strokeWidth=".9" />
            <path d="M19 21l5 3" stroke="#c1cfe8" strokeWidth="3" />
            <circle cx="19" cy="21" r="1.700" fill="#9ab1cc" />
          </svg>
          <span className="leading-[10px]">Behavior</span>
        </button>
      </div>
      <button className="mt-[2px] ml-[2px] h-[14px] w-[46px] shrink-0 border-x border-t-2 border-[#8ea6bd] border-t-[#f0a030] bg-[#fbfbf8] text-[#002848]">
        Common
      </button>
      <div className="mr-[3px] ml-[2px] flex flex-1 flex-col border border-[#bcc5cc] bg-[#f0efe8] pr-[7px] pl-[6px] text-[#002848]">
        <h3 className="mt-[12px] flex h-[10px] items-center gap-1">
          Dynamic Visibility
          <span className="h-px flex-1 bg-[#c9ced1]" />
        </h3>
        <p className="mt-[7px] pl-[10px] leading-[9px] text-[#00bb80]">Show component only if status matches key:</p>
        <div className="mt-[3px] flex h-[14px] items-center pl-[10px]">
          <label htmlFor="status" className="flex-1">Status:</label>
          <input id="status" className={clsx(field, "w-[83px]")} />
          <PickCell />
          <span className="w-[13px]" />
        </div>
        <div className="mt-[2px] flex h-[14px] items-center pl-[10px] text-[#00bb80]">
          <label htmlFor="key" className="flex-1">Key:</label>
          <input id="key" className={clsx(field, "w-[83px]")} />
          <PickCell faded />
          <span className="w-[13px]" />
        </div>
        <h3 className="mt-[17px] flex h-[10px] items-center gap-1">
          Entry Effect
          <span className="h-px flex-1 bg-[#c9ced1]" />
        </h3>
        <div className="mt-[6px] flex h-[14px] items-center pl-[10px]">
          <label htmlFor="type" className="flex-1">Type:</label>
          <span className="flex h-[14px] w-[81px] border border-[#8fa9c4] bg-white">
            <select id="type" className="min-w-0 flex-1 appearance-none pl-[4px]">
              <option>None</option>
            </select>
            <span className="flex w-[9px] items-center justify-center bg-[#c3d3f5]">
              <svg width="6" height="4" viewBox="0 0 6 4"><path d="M.5.5L3 3 5.500.5" fill="none" stroke="#345" strokeWidth="1.200" /></svg>
            </span>
          </span>
        </div>
        <div className="mt-[3px] flex h-[14px] items-center pl-[10px] text-[#00bb80]">
          <label htmlFor="duration" className="flex-1">Duration(seconds):</label>
          <input id="duration" defaultValue="0.2" className={clsx(field, "w-[71px] px-px")} />
          <span className="flex w-[10px] flex-col items-center gap-[3px]">
            <Arrow className="rotate-180 text-[#c4c4bc]" />
            <Arrow className="text-[#c4c4bc]" />
          </span>
        </div>
      </div>
    </aside>
  );
}

function Taskbar() {
  const raised = "shadow-[inset_-1px_-1px_0_#666,inset_1px_1px_0_#fff]";
  return (
    <footer className="flex h-[17px] shrink-0 items-center gap-[4px] border-t border-white bg-[#d1d0c8] pr-[2px] pl-px">
      <button className={clsx("flex h-[14px] w-[33px] items-center gap-px px-[2px] font-bold", raised)}>
        <svg width="10" height="10" viewBox="0 0 10 10">
          <path d="M1 2q2-1 4 0L4.500 5q-2-1-4 0z" fill="#e8512b" />
          <path d="M5.500 2q2 1 4 0L9 5q-2 1-4 0z" fill="#6bb92e" />
          <path d="M.5 5.500q2-1 4 0L4 8.500q-2-1-4 0z" fill="#3f8ee0" />
          <path d="M5 5.500q2 1 4 0L8.500 8.500q-2 1-4 0z" fill="#f4bf2c" />
        </svg>
        Start
      </button>
      <span className="mx-px h-3 w-px bg-[#888]" />
      <button aria-label="Server manager"><Icon name="server" size={11} /></button>
      <button aria-label="Desktop"><Icon name="monitor" size={11} /></button>
      <button aria-label="Browser"><Icon name="ie" size={11} /></button>
      <button className="mx-[4px] text-[9px] leading-[9px]">»</button>
      <span className="h-3 w-px bg-[#888]" />
      <button className="flex h-[14px] w-[102px] items-center gap-[3px] bg-[#eceae4] px-[3px] font-bold whitespace-nowrap shadow-[inset_1px_1px_0_#555,inset_-1px_-1px_0_#fff]">
        <Icon name="orb" size={9} />
        product_manager_da...
      </button>
      <button className={clsx("-ml-[3px] flex h-[14px] w-[103px] items-center gap-[3px] px-[4px] whitespace-nowrap", raised)}>
        <Icon name="orb" size={9} />
        Untitled - Dashboards
      </button>
      <div className="ml-auto flex h-[14px] items-center gap-[3px] px-[3px] shadow-[inset_1px_1px_0_#888,inset_-1px_-1px_0_#fff]">
        <svg width="58" height="11" viewBox="0 0 58 11" aria-hidden="true">
          <circle cx="5" cy="5.500" r="4.500" fill="#1e86c4" />
          <path d="M2 5h6M4 3L2 5l2 2M6 4l2 2-2 2" stroke="#fff" fill="none" />
          <path d="M12 6h8v4h-8zM16 1h3v4h-3z" fill="#555" />
          <path d="M13 3h3v3h-3z" fill="#aaa" />
          <path d="M23 0h10v11H23z" fill="#000" />
          <path d="M24 2l2 6 2-6" stroke="#22c03a" fill="none" strokeWidth="1.200" />
          <path d="M29 5V1h2v4" stroke="#3a62e0" fill="none" />
          <path d="M32 7h-3v3h3" stroke="#e02020" fill="none" />
          <path d="M39 1h8v7h-8z" fill="#3a68b8" stroke="#123" strokeWidth=".5" />
          <path d="M43 5h5v5h-5z" fill="#38b8d8" stroke="#123" strokeWidth=".5" />
          <path d="M50 4h1l3-3v9l-3-3h-1z" fill="#fff" stroke="#555" strokeWidth=".7" />
          <circle cx="55" cy="8" r="2.500" fill="#e03030" />
        </svg>
        <time className="pr-[2px]">15:29</time>
      </div>
    </footer>
  );
}

export default function App() {
  return (
    <div className="flex h-screen min-h-[480px] flex-col overflow-hidden bg-[#efeeea] font-['DejaVu_Sans_Condensed','DejaVu_Sans',sans-serif] text-[7px] leading-[9px] text-[#111]">
      <header className="flex h-[12px] shrink-0 items-center gap-[2px] bg-linear-to-r from-[#0a246a] to-[#a6caf0] px-[2px] text-white">
        <Icon name="orb" size={9} />
        <h1 className="flex-1 font-bold">product_manager_dashboard2.xlf - Dashboards</h1>
        {["M1 7h4", "M1 3h4v4H1zM3 1h4v4", "M1 1l6 6M7 1L1 7"].map((d, i) => (
          <button key={d} aria-label={["Minimize", "Restore", "Close"][i]} className={clsx("h-[9px] w-[10px] bg-[#d4d0c8] px-px shadow-[inset_-1px_-1px_0_#555]", i === 1 && "-ml-[2px]")}>
            <svg width="8" height="8" viewBox="0 0 8 8"><path d={d} stroke="#000" fill="none" strokeWidth="1.100" /></svg>
          </button>
        ))}
      </header>

      <nav className="flex h-[16px] shrink-0 items-center gap-[9px] bg-linear-to-r from-[#d8ccc8] via-[#dcdcd2] to-[#e4e4da]">
        <span className="ml-[3px] -mr-[3px] h-[8px] border-l border-dotted border-[#777]" />
        {menus.map((m) => (
          <a key={m} href="#">
            <span className="underline">{m[0]}</span>
            {m.slice(1)}
          </a>
        ))}
      </nav>

      <div className="flex h-[33px] shrink-0 flex-col items-start bg-linear-to-r from-[#dad2cd] to-[#e4e4da]">
        <div className="flex h-[17px] items-center rounded-r-sm border-b border-[#b5b4aa] bg-linear-to-b from-[#f7f6f3] to-[#d2d1c7] pr-px">
          <Grip />
          <Tool name="page" /><Tool name="open" /><Tool name="save" /><Sep />
          <Tool name="print" /><Tool name="cut" /><Tool name="copy" /><Tool name="paste" /><Sep />
          <Tool name="undo" /><Tool name="redo" /><Sep />
          <Tool name="cursor" active /><Tool name="plus" /><Sep />
          <Tool name="excel" /><Tool name="db" /><Sep />
          <Tool name="gear" /><Tool name="flow" /><Tool name="fit" /><Tool name="expand" /><Sep />
          <button className="flex w-[62px] items-center gap-[2px] pl-[2px] whitespace-nowrap">
            <Icon name="window" size={11} />
            Quick Views
            <Arrow className="ml-auto mr-[2px]" />
          </button>
          <Sep />
          <button className="flex w-[52px] items-center gap-[2px] pl-[2px]">
            <Icon name="preview" size={11} />
            Preview
            <Arrow className="ml-auto mr-[2px]" />
          </button>
          <Grip />
          <Tool name="ppt" /><Tool name="word" /><Tool name="outlook" /><Tool name="pdf" />
        </div>
        <div className="flex h-[16px] items-center rounded-r-sm border-b border-[#b5b4aa] bg-linear-to-b from-[#f7f6f3] to-[#d2d1c7] pr-[5px]">
          <Grip />
          <button className="flex w-[51px] items-center gap-[2px] pl-px">
            <Icon name="themes" size={11} />
            Themes
            <Arrow className="ml-auto mr-[2px]" />
          </button>
          <button className="flex w-[44px] items-center gap-[2px]">
            <Icon name="colors" size={11} />
            Colors
            <Arrow className="ml-auto mr-[2px]" />
          </button>
          <Grip />
          <Tool name="group" /><Tool name="ungroup" /><Sep />
          <Tool name="alignL" /><Tool name="alignC" /><Tool name="alignR" /><Tool name="alignT" />
          <Tool name="alignM" /><Tool name="alignB" /><Tool name="spaceH" /><Tool name="spaceV" />
          <Tool name="sameW" /><Tool name="sameH" /><Tool name="sameB" /><Sep />
          <Tool name="backOff" /><Tool name="backOff" /><Tool name="front" /><Tool name="back" />
          <Grip />
          <button className="flex items-center gap-px whitespace-nowrap">
            <Icon name="start" size={11} />
            Start Page
          </button>
        </div>
      </div>

      <main className="flex min-h-0 flex-1 border-t border-[#1c1c1c]">
        <div className="flex w-[14px] shrink-0 flex-col gap-[10px] bg-[#d3cac6]">
          {["Components", "Object Browser", "Query Browser"].map((t) => (
            <button
              key={t}
              className={clsx(
                "w-[13px] border-r border-b border-[#6d7288] bg-linear-to-r from-[#c3c7d5] to-[#9298b2] pt-[2px] pr-[3px] text-left whitespace-nowrap text-[#444] [writing-mode:vertical-rl]",
                t === "Components" ? "h-[59px]" : "h-[65px]"
              )}
            >
              {t}
            </button>
          ))}
        </div>

        <ObjectBrowser />

        <section className="flex min-w-0 flex-1 flex-col">
          <DesignCanvas />
          <div className="h-[5px] shrink-0 border-b border-black bg-[#d6d5cc]" />
          <div className="flex min-h-0 flex-1 flex-col bg-[#b6d8f9] font-['Noto_Sans',sans-serif]">
            <div className="h-[17px] shrink-0 border-b border-[#e6f2fc] bg-linear-to-b from-[#dbe8fa] via-[#c5d6ee] to-[#c9ddf5]" />
            <nav className="flex h-[18px] shrink-0 items-center gap-[18px] overflow-hidden pt-px pr-[2px] text-[#24498c]">
              <a href="#" className="w-[17px]">ayout</a>
              <a href="#">Formulas</a>
              <a href="#">Data</a>
              <a href="#">Review</a>
              <a href="#">View</a>
              <button aria-label="Help" className="ml-auto">
                <svg width="10" height="10" viewBox="0 0 10 10">
                  <circle cx="5" cy="5" r="4.500" fill="#2c63c8" stroke="#dcebff" />
                  <path d="M3.500 4q0-2 1.500-2t1.500 1.500T5 6M5 7v1" fill="none" stroke="#fff" />
                </svg>
              </button>
            </nav>
            <Ribbon />
            <div className="flex h-[14px] shrink-0 items-center border-b border-[#31557f] bg-white">
              <span className="flex h-full w-[21px] items-center justify-end border-r border-[#31557f] bg-[#c5d5ea] pr-1 font-['Liberation_Serif',serif] text-[9px] italic">fx</span>
              <input aria-label="Formula" defaultValue="X Axis" className="min-w-0 flex-1 bg-[#fafafa] pl-1 text-[8px]" />
              <span className="h-full w-[10px] bg-linear-to-b from-[#eef3fa] to-[#b5c9e5]" />
            </div>
            <Sheet />
          </div>
        </section>

        <Properties />
      </main>

      <div className="flex h-[13px] shrink-0 items-center gap-[2px] bg-linear-to-r from-[#dcd4cd] via-[#e8e7e0] to-[#fafafa] pr-px pl-[2px]">
        <span className="flex-1">Ready</span>
        <span className="border border-[#888] px-px text-[#888]">CAP</span>
        <span className="border border-[#888] px-px">NUM</span>
        <span className="border border-[#888] px-px text-[#888]">SCRL</span>
      </div>
      <Taskbar />
    </div>
  );
}
